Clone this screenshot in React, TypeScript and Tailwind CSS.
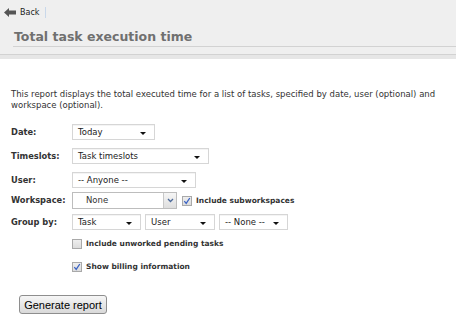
import React from "react";

// Small dropdown imitating the old-style select boxes
function Select({ value, width }: { value: string; width: string })
{
  return (
    <div
      className={ `flex h-[16px] items-center justify-between border border-[#d6d6d6] bg-white pl-[5px] pr-[8px] text-[8.5px] text-[#222] shadow-[inset_0_1px_0_#f4f4f4] ${ width }` }
    >
      <span className="font-['DejaVu_Sans',Verdana,sans-serif] leading-none">{ value }</span>
      <span className="mt-[2px] h-0 w-0 border-x-[3px] border-t-[3px] border-x-transparent border-t-[#111]" />
    </div>
  );
}

function Check({ checked }: { checked: boolean })
{
  return (
    <span className="flex h-[10px] w-[10px] items-center justify-center border border-[#a9a9a9] bg-gradient-to-b from-[#eeeeee] to-[#dcdcdc]">
      { checked && (
        <svg width="8" height="8" viewBox="0 0 8 8">
          <path d="M1.3 4.2 L3.2 6.4 L6.8 1" fill="none" stroke="#3b63c4" strokeWidth="1.3" />
        </svg>
      ) }
    </span>
  );
}

function Label({ children }: { children: React.ReactNode })
{
  return (
    <div className="w-[72px] shrink-0 pl-[11px] text-[8.3px] font-bold text-[#333]">{ children }</div>
  );
}

export default function App()
{
  return (
    <div className="h-[332px] w-[456px] overflow-hidden bg-white font-['DejaVu_Sans',Verdana,sans-serif] text-[#333]">
      {/* header */ }
      <div className="bg-[#efefef]">
        <div className="flex h-[24px] items-center pl-[4px] pt-[1px]">
          <svg width="13" height="9" viewBox="0 0 13 9">
            <path d="M0 4.5 L5 0 L5 2.5 L12 2.5 L12 6.5 L5 6.5 L5 9 Z" fill="#555" />
          </svg>
          <span className="ml-[3px] text-[8px] text-[#222]">Back</span>
          <span className="ml-[6px] h-[11px] w-px bg-[#c9d8ea]" />
        </div>
        <div className="h-[22px] pl-[14px] pt-[5px] text-[12.5px] leading-[16px] font-bold text-[#707070]">
          Total task execution time
        </div>
        <div className="ml-[13px] h-px bg-[#d2d2d2]" />
        <div className="h-[7px]" />
      </div>
      <div className="h-px bg-[#d2d2d2]" />
      <div className="h-[4px] bg-[#e6e6e6]" />

      {/* body */ }
      <div className="pl-[11px] pr-[4px] pt-[30px] text-[8.5px] leading-[11px] text-[#333]">
        This report displays the total executed time for a list of tasks, specified by date, user (optional) and workspace (optional).
      </div>

      <div className="mt-[13px] flex flex-col">
        <div className="flex items-center">
          <Label>Date:</Label>
          <Select value="Today" width="w-[83px]" />
        </div>
        <div className="mt-[8px] flex items-center">
          <Label>Timeslots:</Label>
          <Select value="Task timeslots" width="w-[137px]" />
        </div>
        <div className="mt-[8px] flex items-center">
          <Label>User:</Label>
          <Select value="-- Anyone --" width="w-[124px]" />
        </div>
        <div className="mt-[4px] flex items-center">
          <Label>Workspace:</Label>
          <div className="flex h-[17px] w-[105px] items-stretch border border-[#bdbdbd] bg-white">
            <span className="flex flex-1 items-center pl-[13px] text-[8.5px] text-[#333]">None</span>
            <span className="flex w-[13px] items-center justify-center border-l border-[#c8c8c8] bg-gradient-to-b from-[#f6f6f6] to-[#dedede]">
              <svg width="7" height="5" viewBox="0 0 7 5">
                <path d="M1 1 L3.5 3.5 L6 1" fill="none" stroke="#4d6a9a" strokeWidth="1.3" />
              </svg>
            </span>
          </div>
          <span className="ml-[5px]"><Check checked /></span>
          <span className="ml-[4px] text-[7.5px] font-bold text-[#333]">Include subworkspaces</span>
        </div>
        <div className="mt-[5px] flex items-center">
          <Label>Group by:</Label>
          <div className="flex gap-[4px]">
            <Select value="Task" width="w-[69px]" />
            <Select value="User" width="w-[70px]" />
            <Select value="-- None --" width="w-[69px]" />
          </div>
        </div>
        <div className="mt-[8px] flex items-center pl-[72px]">
          <Check checked={ false } />
          <span className="ml-[4px] text-[7.5px] font-bold text-[#333]">Include unworked pending tasks</span>
        </div>
        <div className="mt-[12px] flex items-center pl-[72px]">
          <Check checked />
          <span className="ml-[4px] text-[7.5px] font-bold text-[#333]">Show billing information</span>
        </div>
        <div className="mt-[19px] pl-[19px]">
          <button
            type="button"
            className="h-[19px] w-[88px] rounded-[3px] border border-[#8e8e8e] bg-gradient-to-b from-[#f6f6f6] to-[#d9d9d9] font-['Liberation_Sans',Arial,sans-serif] text-[11px] text-black"
          >
            Generate report
          </button>
        </div>
      </div>
    </div>
  );
}
